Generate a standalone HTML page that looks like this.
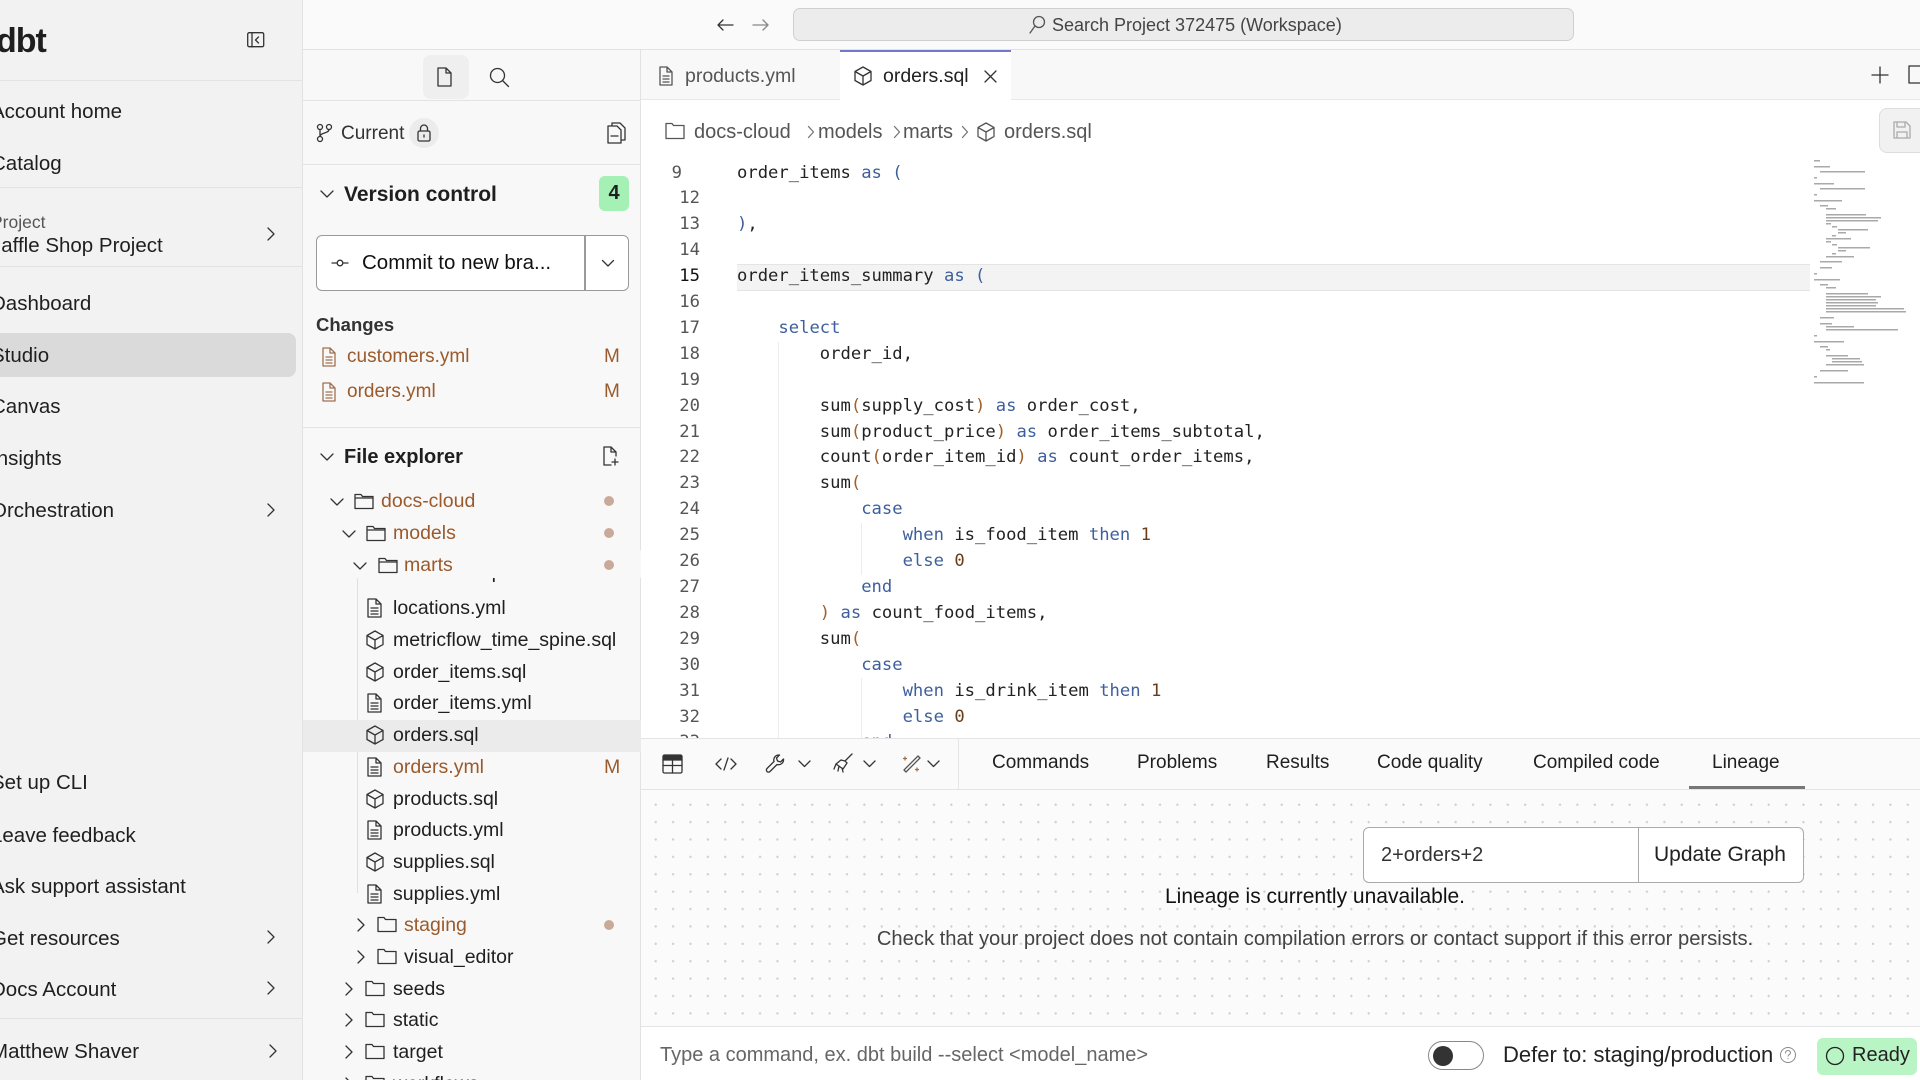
<!DOCTYPE html>
<html><head><meta charset="utf-8"><style>
*{box-sizing:border-box;margin:0;padding:0}
body{width:1920px;height:1080px;overflow:hidden;position:relative;background:#fff;font-family:"Liberation Sans",sans-serif;color:#1f1f1f}
.a{position:absolute;white-space:nowrap}
.r{position:absolute;white-space:nowrap;height:28px;line-height:28px}
svg{position:absolute;overflow:visible}
.ic{fill:none;stroke:#333;stroke-width:1.3;stroke-linecap:round;stroke-linejoin:round}
.code{position:absolute;left:737px;top:158px;font-family:"DejaVu Sans Mono","Liberation Mono",monospace;font-size:17.2px;line-height:25.9px;white-space:pre;color:#222}
.ln{position:absolute;left:660px;width:40px;top:158px;font-family:"DejaVu Sans Mono","Liberation Mono",monospace;font-size:17.2px;line-height:25.9px;text-align:right;color:#555;white-space:pre}
.k{color:#3d5f9c}.p{color:#a0602a}.n{color:#6a3d1a}
.tree{font-size:19.5px}
.org{color:#9a5a2c}
.sb{font-size:20.5px}
</style></head><body>

<!-- left sidebar -->
<div class="a" style="left:0;top:0;width:303px;height:1080px;background:#f2f2f2;border-right:1px solid #e2e2e2"></div>
<div class="a" style="left:-4px;top:22px;font-size:34px;font-weight:bold;letter-spacing:-1px">dbt</div>
<svg style="left:247px;top:32px" width="18" height="16"><rect x="0.7" y="0.7" width="16" height="14" rx="1.5" class="ic"/><path d="M5 1v14M11.5 5l-3 3 3 3" class="ic"/></svg>
<div class="a" style="left:0;top:80px;width:303px;height:1px;background:#e3e3e3"></div>
<div class="r sb" style="left:-9px;top:98px">Account home</div>
<div class="r sb" style="left:-9px;top:150px">Catalog</div>
<div class="a" style="left:0;top:187px;width:303px;height:1px;background:#e3e3e3"></div>
<div class="r" style="left:-9px;top:208px;font-size:17.5px;color:#555">Project</div>
<div class="r sb" style="left:-9px;top:232px">Jaffle Shop Project</div>
<svg style="left:266px;top:226px" width="10" height="16"><path d="M2 2l6 6-6 6" class="ic"/></svg>
<div class="a" style="left:0;top:266px;width:303px;height:1px;background:#e3e3e3"></div>
<div class="r sb" style="left:-9px;top:290px">Dashboard</div>
<div class="a" style="left:0;top:333px;width:296px;height:44px;background:#dadada;border-radius:0 8px 8px 0"></div>
<div class="r sb" style="left:-9px;top:342px">Studio</div>
<div class="r sb" style="left:-9px;top:393px">Canvas</div>
<div class="r sb" style="left:-9px;top:445px">Insights</div>
<div class="r sb" style="left:-9px;top:497px">Orchestration</div>
<svg style="left:266px;top:502px" width="10" height="16"><path d="M2 2l6 6-6 6" class="ic"/></svg>
<div class="r sb" style="left:-9px;top:769px">Set up CLI</div>
<div class="r sb" style="left:-9px;top:822px">Leave feedback</div>
<div class="r sb" style="left:-9px;top:873px">Ask support assistant</div>
<div class="r sb" style="left:-9px;top:925px">Get resources</div>
<svg style="left:266px;top:929px" width="10" height="16"><path d="M2 2l6 6-6 6" class="ic"/></svg>
<div class="r sb" style="left:-9px;top:976px">Docs Account</div>
<svg style="left:266px;top:980px" width="10" height="16"><path d="M2 2l6 6-6 6" class="ic"/></svg>
<div class="a" style="left:0;top:1018px;width:303px;height:1px;background:#e3e3e3"></div>
<div class="r sb" style="left:-9px;top:1038px">Matthew Shaver</div>
<svg style="left:268px;top:1043px" width="10" height="16"><path d="M2 2l6 6-6 6" class="ic"/></svg>

<!-- top bar -->
<div class="a" style="left:303px;top:0;width:1617px;height:50px;background:#fafafa;border-bottom:1px solid #e2e2e2"></div>
<svg style="left:716px;top:18px" width="18" height="14"><path d="M17 7H2M7 2L2 7l5 5" class="ic"/></svg>
<svg style="left:752px;top:18px" width="18" height="14"><path d="M1 7h15M11 2l5 5-5 5" class="ic" style="stroke:#888"/></svg>
<div class="a" style="left:793px;top:8px;width:781px;height:33px;background:#ececec;border:1px solid #cfcfcf;border-radius:7px"></div>
<svg style="left:1028px;top:15px" width="18" height="20"><circle cx="11" cy="7" r="5.5" class="ic" style="stroke:#555"/><path d="M7 11l-5 7" class="ic" style="stroke:#555"/></svg>
<div class="a" style="left:1052px;top:15px;font-size:18px;color:#444">Search Project 372475 (Workspace)</div>

<!-- second panel -->
<div class="a" style="left:303px;top:50px;width:338px;height:1030px;background:#f8f8f8;border-right:1px solid #e2e2e2"></div>
<div class="a" style="left:423px;top:55px;width:46px;height:44px;background:#efefef;border-radius:8px"></div>
<svg style="left:437px;top:67px" width="16" height="20"><path d="M1 1h8l5 5v13H1z M9 1v5h5" class="ic"/></svg>
<svg style="left:489px;top:67px" width="22" height="22"><circle cx="8.5" cy="8.5" r="7" class="ic"/><path d="M13.5 13.5l6 6" class="ic"/></svg>
<div class="a" style="left:303px;top:100px;width:338px;height:1px;background:#e3e3e3"></div>
<svg style="left:316px;top:123px" width="18" height="20"><circle cx="4" cy="4" r="2.5" class="ic"/><circle cx="13" cy="4" r="2.5" class="ic"/><circle cx="4" cy="16" r="2.5" class="ic"/><path d="M4 6.5v7M13 6.5c0 4-9 3-9 7" class="ic"/></svg>
<div class="r" style="left:341px;top:120px;font-size:19px;color:#333">Current</div>
<div class="a" style="left:409px;top:118px;width:30px;height:30px;border-radius:15px;background:#ececec"></div>
<svg style="left:417px;top:124px" width="14" height="18"><rect x="1" y="7" width="12" height="10" rx="1.5" class="ic"/><path d="M3.5 7V4.5a3.5 3.5 0 017 0V7M7 11v2" class="ic"/></svg>
<svg style="left:607px;top:122px" width="20" height="22"><path d="M5 4V1h8l5 5v12h-3 M1 4h9l4 4v13H1z M4 14h7" class="ic"/></svg>
<div class="a" style="left:303px;top:164px;width:338px;height:1px;background:#e3e3e3"></div>
<svg style="left:320px;top:189px" width="14" height="10"><path d="M1 2l6 6 6-6" class="ic"/></svg>
<div class="r" style="left:344px;top:181px;font-size:21px;font-weight:bold">Version control</div>
<div class="a" style="left:599px;top:176px;width:30px;height:35px;background:#a5f0b4;border-radius:6px;font-size:20px;font-weight:bold;text-align:center;line-height:35px">4</div>
<div class="a" style="left:316px;top:235px;width:313px;height:56px;border:1.5px solid #9a9a9a;border-radius:6px;background:#fff"></div>
<div class="a" style="left:584px;top:236px;width:1.5px;height:54px;background:#9a9a9a"></div>
<svg style="left:331px;top:257px" width="18" height="12"><circle cx="9" cy="6" r="2.8" class="ic"/><path d="M1 6h5M12 6h5" class="ic"/></svg>
<div class="r" style="left:362px;top:249px;font-size:20.5px;color:#111">Commit to new bra...</div>
<svg style="left:601px;top:259px" width="14" height="9"><path d="M1.5 1.5l5.5 5.5 5.5-5.5" class="ic"/></svg>
<div class="r" style="left:316px;top:311px;font-size:18.5px;font-weight:bold;color:#333">Changes</div>
<svg style="left:322px;top:347px" width="14" height="20"><path d="M1 1h7l5 5v13H1z M8 1v5h5 M4 10h6M4 13h6M4 16h6" class="ic" style="stroke:#a07050"/></svg>
<div class="r org" style="left:347px;top:343px;font-size:19px">customers.yml</div>
<div class="r org" style="left:604px;top:343px;font-size:19px">M</div>
<svg style="left:322px;top:382px" width="14" height="20"><path d="M1 1h7l5 5v13H1z M8 1v5h5 M4 10h6M4 13h6M4 16h6" class="ic" style="stroke:#a07050"/></svg>
<div class="r org" style="left:347px;top:378px;font-size:19px">orders.yml</div>
<div class="r org" style="left:604px;top:378px;font-size:19px">M</div>
<div class="a" style="left:303px;top:427px;width:338px;height:1px;background:#e3e3e3"></div>
<svg style="left:320px;top:452px" width="14" height="10"><path d="M1 2l6 6 6-6" class="ic"/></svg>
<div class="r" style="left:344px;top:443px;font-size:20px;font-weight:bold">File explorer</div>
<svg style="left:603px;top:446px" width="16" height="20"><path d="M13 10V6L8 1H1v18h7 M8 1v5h5 M12 13v6M9 16h6" class="ic"/></svg>

<!-- tree -->
<div class="a tree" style="left:303px;top:485px;width:338px;height:595px;overflow:hidden">
 <svg style="left:27px;top:12px" width="14" height="10"><path d="M1 2l6 6 6-6" class="ic"/></svg>
 <svg style="left:51px;top:8px" width="20" height="17"><path d="M1 1.5h6l1.5 2H19v12H1z M1 5h18" class="ic"/></svg>
 <div class="r org" style="left:78px;top:2px">docs-cloud</div>
 <div class="a" style="left:301px;top:11px;width:10px;height:10px;border-radius:5px;background:#c9aa98"></div>
 <svg style="left:39px;top:44px" width="14" height="10"><path d="M1 2l6 6 6-6" class="ic"/></svg>
 <svg style="left:63px;top:40px" width="20" height="17"><path d="M1 1.5h6l1.5 2H19v12H1z M1 5h18" class="ic"/></svg>
 <div class="r org" style="left:90px;top:34px">models</div>
 <div class="a" style="left:301px;top:43px;width:10px;height:10px;border-radius:5px;background:#c9aa98"></div>
 <div class="a" style="left:0;top:88px;width:338px;height:507px;overflow:hidden">
  <div class="a" style="left:54px;top:0;width:1px;height:320px;background:#e0e0e0"></div>
  <div class="r" style="left:90px;top:-15px">locations.sql</div>
  <svg style="left:64px;top:25px" width="16" height="20"><path d="M1 1h8l5 5v13H1z M9 1v5h5 M4 10h7M4 13h7M4 16h7" class="ic"/></svg>
  <div class="r" style="left:90px;top:21px">locations.yml</div>
  <svg style="left:62px;top:57px" width="20" height="20"><path d="M10 1l8 4.5v9L10 19l-8-4.5v-9z M2 5.5L10 10l8-4.5 M10 10v9" class="ic"/></svg>
  <div class="r" style="left:90px;top:53px">metricflow_time_spine.sql</div>
  <svg style="left:62px;top:89px" width="20" height="20"><path d="M10 1l8 4.5v9L10 19l-8-4.5v-9z M2 5.5L10 10l8-4.5 M10 10v9" class="ic"/></svg>
  <div class="r" style="left:90px;top:85px">order_items.sql</div>
  <svg style="left:64px;top:120px" width="16" height="20"><path d="M1 1h8l5 5v13H1z M9 1v5h5 M4 10h7M4 13h7M4 16h7" class="ic"/></svg>
  <div class="r" style="left:90px;top:116px">order_items.yml</div>
  <div class="a" style="left:0;top:147px;width:338px;height:32px;background:#ebebeb"></div>
  <svg style="left:62px;top:152px" width="20" height="20"><path d="M10 1l8 4.5v9L10 19l-8-4.5v-9z M2 5.5L10 10l8-4.5 M10 10v9" class="ic"/></svg>
  <div class="r" style="left:90px;top:148px">orders.sql</div>
  <svg style="left:64px;top:184px" width="16" height="20"><path d="M1 1h8l5 5v13H1z M9 1v5h5 M4 10h7M4 13h7M4 16h7" class="ic"/></svg>
  <div class="r org" style="left:90px;top:180px">orders.yml</div>
  <div class="r org" style="left:301px;top:180px">M</div>
  <svg style="left:62px;top:216px" width="20" height="20"><path d="M10 1l8 4.5v9L10 19l-8-4.5v-9z M2 5.5L10 10l8-4.5 M10 10v9" class="ic"/></svg>
  <div class="r" style="left:90px;top:212px">products.sql</div>
  <svg style="left:64px;top:247px" width="16" height="20"><path d="M1 1h8l5 5v13H1z M9 1v5h5 M4 10h7M4 13h7M4 16h7" class="ic"/></svg>
  <div class="r" style="left:90px;top:243px">products.yml</div>
  <svg style="left:62px;top:279px" width="20" height="20"><path d="M10 1l8 4.5v9L10 19l-8-4.5v-9z M2 5.5L10 10l8-4.5 M10 10v9" class="ic"/></svg>
  <div class="r" style="left:90px;top:275px">supplies.sql</div>
  <svg style="left:64px;top:311px" width="16" height="20"><path d="M1 1h8l5 5v13H1z M9 1v5h5 M4 10h7M4 13h7M4 16h7" class="ic"/></svg>
  <div class="r" style="left:90px;top:307px">supplies.yml</div>
  <svg style="left:53px;top:344px" width="10" height="16"><path d="M2 2l6 6-6 6" class="ic"/></svg>
  <svg style="left:74px;top:343px" width="20" height="17"><path d="M1 1.5h6l1.5 2H19v12H1z" class="ic"/></svg>
  <div class="r org" style="left:101px;top:338px">staging</div>
  <div class="a" style="left:301px;top:347px;width:10px;height:10px;border-radius:5px;background:#c9aa98"></div>
  <svg style="left:53px;top:376px" width="10" height="16"><path d="M2 2l6 6-6 6" class="ic"/></svg>
  <svg style="left:74px;top:375px" width="20" height="17"><path d="M1 1.5h6l1.5 2H19v12H1z" class="ic"/></svg>
  <div class="r" style="left:101px;top:370px">visual_editor</div>
  <svg style="left:41px;top:408px" width="10" height="16"><path d="M2 2l6 6-6 6" class="ic"/></svg>
  <svg style="left:62px;top:407px" width="20" height="17"><path d="M1 1.5h6l1.5 2H19v12H1z" class="ic"/></svg>
  <div class="r" style="left:90px;top:402px">seeds</div>
  <svg style="left:41px;top:439px" width="10" height="16"><path d="M2 2l6 6-6 6" class="ic"/></svg>
  <svg style="left:62px;top:438px" width="20" height="17"><path d="M1 1.5h6l1.5 2H19v12H1z" class="ic"/></svg>
  <div class="r" style="left:90px;top:433px">static</div>
  <svg style="left:41px;top:471px" width="10" height="16"><path d="M2 2l6 6-6 6" class="ic"/></svg>
  <svg style="left:62px;top:470px" width="20" height="17"><path d="M1 1.5h6l1.5 2H19v12H1z" class="ic"/></svg>
  <div class="r" style="left:90px;top:465px">target</div>
  <svg style="left:41px;top:503px" width="10" height="16"><path d="M2 2l6 6-6 6" class="ic"/></svg>
  <svg style="left:62px;top:502px" width="20" height="17"><path d="M1 1.5h6l1.5 2H19v12H1z" class="ic"/></svg>
  <div class="r" style="left:90px;top:497px">workflows</div>
 </div>
 <div class="a" style="left:0;top:65px;width:338px;height:28px;background:#f8f8f8"></div>
 <svg style="left:50px;top:76px" width="14" height="10"><path d="M1 2l6 6 6-6" class="ic"/></svg>
 <svg style="left:75px;top:72px" width="20" height="17"><path d="M1 1.5h6l1.5 2H19v12H1z M1 5h18" class="ic"/></svg>
 <div class="r org" style="left:101px;top:66px">marts</div>
 <div class="a" style="left:301px;top:75px;width:10px;height:10px;border-radius:5px;background:#c9aa98"></div>
</div>

<!-- editor tabs -->
<div class="a" style="left:641px;top:50px;width:1279px;height:50px;background:#f8f8f8;border-bottom:1px solid #e8e8e8"></div>
<div class="a" style="left:840px;top:50px;width:171px;height:51px;background:#fff;border-top:2px solid #7378cc"></div>
<svg style="left:659px;top:66px" width="14" height="20"><path d="M1 1h7l5 5v13H1z M8 1v5h5 M4 10h6M4 13h6M4 16h6" class="ic" style="stroke:#555"/></svg>
<div class="r" style="left:685px;top:62px;font-size:19.5px;color:#555">products.yml</div>
<svg style="left:853px;top:66px" width="20" height="20"><path d="M10 1l8 4.5v9L10 19l-8-4.5v-9z M2 5.5L10 10l8-4.5 M10 10v9" class="ic"/></svg>
<div class="r" style="left:883px;top:62px;font-size:19.5px;color:#222">orders.sql</div>
<svg style="left:984px;top:70px" width="13" height="13"><path d="M1 1l11 11M12 1L1 12" class="ic"/></svg>
<svg style="left:1871px;top:66px" width="18" height="18"><path d="M9 1v16M1 9h16" class="ic"/></svg>
<svg style="left:1908px;top:65px" width="14" height="20"><rect x="1" y="1" width="14" height="17" class="ic"/></svg>

<!-- breadcrumb -->
<svg style="left:665px;top:122px" width="20" height="18"><path d="M1 1.5h6l1.5 2H19v13H1z" class="ic" style="stroke:#555"/></svg>
<div class="r" style="left:694px;top:118px;font-size:20px;color:#555">docs-cloud</div>
<svg style="left:807px;top:125px" width="8" height="14"><path d="M1.5 1.5l5 5.5-5 5.5" class="ic" style="stroke:#777"/></svg>
<div class="r" style="left:818px;top:118px;font-size:20px;color:#555">models</div>
<svg style="left:893px;top:125px" width="8" height="14"><path d="M1.5 1.5l5 5.5-5 5.5" class="ic" style="stroke:#777"/></svg>
<div class="r" style="left:903px;top:118px;font-size:20px;color:#555">marts</div>
<svg style="left:961px;top:125px" width="8" height="14"><path d="M1.5 1.5l5 5.5-5 5.5" class="ic" style="stroke:#777"/></svg>
<svg style="left:976px;top:122px" width="20" height="20"><path d="M10 1l8 4.5v9L10 19l-8-4.5v-9z M2 5.5L10 10l8-4.5 M10 10v9" class="ic" style="stroke:#555"/></svg>
<div class="r" style="left:1004px;top:118px;font-size:20px;color:#555">orders.sql</div>
<div class="a" style="left:1879px;top:108px;width:50px;height:45px;background:#f1f1f1;border:1px solid #ddd;border-radius:8px"></div>
<svg style="left:1893px;top:121px" width="18" height="18"><path d="M1 1h12l4 4v12H1z M4 1v5h8V1 M4 17v-6h10v6" class="ic" style="stroke:#aaa"/></svg>

<!-- code -->
<div class="a" style="left:737px;top:264px;width:1073px;height:27px;background:#f3f3f3;border-top:1px solid #e4e4e4;border-bottom:1px solid #e4e4e4"></div>
<div class="a" style="left:778px;top:342px;width:1px;height:396px;background:#ececec"></div>
<div class="a" style="left:861px;top:523px;width:1px;height:52px;background:#ececec"></div>
<div class="a" style="left:861px;top:678px;width:1px;height:60px;background:#ececec"></div>
<div class="a" style="left:641px;top:118px;width:1170px;height:620px;overflow:hidden">
<div class="ln" style="left:19px;top:42.5px"><span style="position:relative;left:-18px">9</span>
12
13
14
<span style="color:#111">15</span>
16
17
18
19
20
21
22
23
24
25
26
27
28
29
30
31
32
33</div>
<div class="code" style="left:96px;top:42.5px">order_items <span class="k">as</span> <span class="k">(</span>

<span class="k">)</span>,

order_items_summary <span class="k">as</span> <span class="k">(</span>

    <span class="k">select</span>
        order_id,

        sum<span class="p">(</span>supply_cost<span class="p">)</span> <span class="k">as</span> order_cost,
        sum<span class="p">(</span>product_price<span class="p">)</span> <span class="k">as</span> order_items_subtotal,
        count<span class="p">(</span>order_item_id<span class="p">)</span> <span class="k">as</span> count_order_items,
        sum<span class="p">(</span>
            <span class="k">case</span>
                <span class="k">when</span> is_food_item <span class="k">then</span> <span class="n">1</span>
                <span class="k">else</span> <span class="n">0</span>
            <span class="k">end</span>
        <span class="p">)</span> <span class="k">as</span> count_food_items,
        sum<span class="p">(</span>
            <span class="k">case</span>
                <span class="k">when</span> is_drink_item <span class="k">then</span> <span class="n">1</span>
                <span class="k">else</span> <span class="n">0</span>
            <span class="k">end</span></div>
</div>
<!-- minimap -->
<svg style="left:1812px;top:160px" width="100" height="225">
<g fill="#a9a9a9">
<rect x="2" y="0" width="6" height="1.5"/><rect x="2" y="6" width="16" height="1.5"/><rect x="8" y="11" width="45" height="1.5"/><rect x="2" y="17" width="3" height="1.5"/>
<rect x="2" y="23" width="20" height="1.5"/><rect x="8" y="28" width="45" height="1.5"/><rect x="2" y="34" width="3" height="1.5"/>
<rect x="2" y="40" width="28" height="1.5"/><rect x="8" y="45" width="8" height="1.5"/><rect x="14" y="48" width="10" height="1.5"/>
<rect x="14" y="54" width="40" height="1.5"/><rect x="14" y="57" width="55" height="1.5"/><rect x="14" y="60" width="52" height="1.5"/><rect x="14" y="63" width="5" height="1.5"/>
<rect x="20" y="66" width="5" height="1.5"/><rect x="26" y="69" width="30" height="1.5"/><rect x="26" y="72" width="8" height="1.5"/><rect x="20" y="75" width="4" height="1.5"/>
<rect x="14" y="78" width="25" height="1.5"/><rect x="14" y="81" width="5" height="1.5"/><rect x="20" y="84" width="5" height="1.5"/><rect x="26" y="87" width="32" height="1.5"/><rect x="26" y="90" width="8" height="1.5"/><rect x="20" y="93" width="4" height="1.5"/><rect x="14" y="96" width="28" height="1.5"/>
<rect x="8" y="101" width="22" height="1.5"/><rect x="8" y="107" width="12" height="1.5"/><rect x="2" y="113" width="3" height="1.5"/>
<rect x="2" y="119" width="26" height="1.5"/><rect x="8" y="124" width="8" height="1.5"/><rect x="14" y="127" width="10" height="1.5"/>
<rect x="14" y="133" width="42" height="1.5"/><rect x="14" y="136" width="55" height="1.5"/><rect x="14" y="139" width="50" height="1.5"/><rect x="14" y="142" width="52" height="1.5"/><rect x="14" y="145" width="50" height="1.5"/><rect x="14" y="148" width="78" height="1.5"/><rect x="14" y="151" width="80" height="1.5"/>
<rect x="8" y="157" width="14" height="1.5"/><rect x="8" y="163" width="12" height="1.5"/><rect x="14" y="166" width="28" height="1.5"/><rect x="14" y="169" width="72" height="1.5"/><rect x="2" y="175" width="3" height="1.5"/>
<rect x="2" y="181" width="30" height="1.5"/><rect x="8" y="186" width="8" height="1.5"/><rect x="14" y="189" width="4" height="1.5"/><rect x="14" y="195" width="22" height="1.5"/><rect x="20" y="198" width="28" height="1.5"/><rect x="20" y="201" width="30" height="1.5"/><rect x="14" y="204" width="38" height="1.5"/><rect x="8" y="210" width="28" height="1.5"/><rect x="2" y="216" width="3" height="1.5"/><rect x="2" y="222" width="50" height="1.5"/>
</g></svg>

<!-- bottom toolbar -->
<div class="a" style="left:641px;top:738px;width:1279px;height:52px;background:#fafafa;border-top:1px solid #e4e4e4;border-bottom:1px solid #e4e4e4"></div>
<div class="a" style="left:958px;top:739px;width:1px;height:50px;background:#e6e6e6"></div>
<svg style="left:662px;top:754px" width="22" height="20"><rect x="1" y="1" width="19" height="18" rx="1.5" class="ic"/><path d="M1 6h19M1 11.5h19M10.5 6v13" class="ic"/><rect x="1" y="1" width="19" height="5" fill="#333"/></svg>
<svg style="left:715px;top:757px" width="22" height="14"><path d="M6 2L1 7l5 5M16 2l5 5-5 5M13 1L9 13" class="ic"/></svg>
<svg style="left:765px;top:753px" width="22" height="22"><path d="M14 2a5 5 0 00-5 6.5L2 15.5a2 2 0 003 3l7-7A5 5 0 0018.5 6l-3 3-3-1-1-3 3-3z" class="ic"/></svg>
<svg style="left:798px;top:760px" width="13" height="8"><path d="M1 1l5.5 5.5L12 1" class="ic"/></svg>
<svg style="left:832px;top:753px" width="22" height="22"><path d="M20 1l-7 7M13 8l2 2-4 6-7-5 5-4z M4 11l-2 5M7 13l-1 5M10 15l1 4" class="ic"/></svg>
<svg style="left:863px;top:760px" width="13" height="8"><path d="M1 1l5.5 5.5L12 1" class="ic"/></svg>
<svg style="left:900px;top:753px" width="22" height="22"><path d="M18 3l2 2L6 19l-2-2z" class="ic" style="stroke:#555"/><path d="M5 4v3M3.5 5.5h3M17 15v3M15.5 16.5h3" class="ic" style="stroke:#a07050"/></svg>
<svg style="left:927px;top:760px" width="13" height="8"><path d="M1 1l5.5 5.5L12 1" class="ic"/></svg>
<div class="r" style="left:992px;top:749px;font-size:19px">Commands</div>
<div class="r" style="left:1137px;top:749px;font-size:19px">Problems</div>
<div class="r" style="left:1266px;top:749px;font-size:19px">Results</div>
<div class="r" style="left:1377px;top:749px;font-size:19px">Code quality</div>
<div class="r" style="left:1533px;top:749px;font-size:19px">Compiled code</div>
<div class="r" style="left:1712px;top:749px;font-size:19px">Lineage</div>
<div class="a" style="left:1689px;top:786px;width:116px;height:3px;background:#777"></div>

<!-- lineage area -->
<div class="a" style="left:641px;top:790px;width:1279px;height:236px;background-color:#fbfbfb;background-image:radial-gradient(circle,#cfcfcf 1px,transparent 1.3px);background-size:17.4px 17.4px;background-position:6px 6px"></div>
<div class="a" style="left:1363px;top:827px;width:441px;height:56px;background:#fff;border:1.5px solid #aaa;border-radius:6px"></div>
<div class="a" style="left:1638px;top:828px;width:1px;height:54px;background:#aaa"></div>
<div class="r" style="left:1381px;top:841px;font-size:20px;color:#333">2+orders+2</div>
<div class="r" style="left:1654px;top:841px;font-size:21px;color:#222">Update Graph</div>
<div class="r" style="left:915px;top:883px;width:800px;text-align:center;font-size:21px;color:#111">Lineage is currently unavailable.</div>
<div class="r" style="left:615px;top:925px;width:1400px;text-align:center;font-size:20.2px;color:#444">Check that your project does not contain compilation errors or contact support if this error persists.</div>

<!-- command bar -->
<div class="a" style="left:641px;top:1026px;width:1279px;height:54px;background:#fff;border-top:1px solid #e4e4e4"></div>
<div class="r" style="left:660px;top:1041px;font-size:20px;color:#666">Type a command, ex. dbt build --select &lt;model_name&gt;</div>
<div class="a" style="left:1428px;top:1041px;width:56px;height:29px;border:1.5px solid #888;border-radius:15px;background:#fff"></div>
<div class="a" style="left:1433px;top:1046px;width:20px;height:20px;border-radius:10px;background:#333"></div>
<div class="r" style="left:1503px;top:1041px;font-size:22px;color:#222">Defer to: staging/production</div>
<svg style="left:1779px;top:1046px" width="18" height="18"><circle cx="9" cy="9" r="7.5" class="ic" style="stroke:#888;stroke-width:1"/><path d="M6.5 7a2.5 2.5 0 115 0c0 1.5-2.5 1.7-2.5 3.2M9 12.5v.3" class="ic" style="stroke:#888;stroke-width:1"/></svg>
<div class="a" style="left:1817px;top:1038px;width:100px;height:37px;background:#b9f5c4;border-radius:6px"></div>
<svg style="left:1825px;top:1046px" width="22" height="22"><circle cx="10" cy="10" r="8.5" class="ic" style="stroke:#222"/></svg>
<div class="r" style="left:1852px;top:1041px;font-size:20px;color:#222">Ready</div>
</body></html>
